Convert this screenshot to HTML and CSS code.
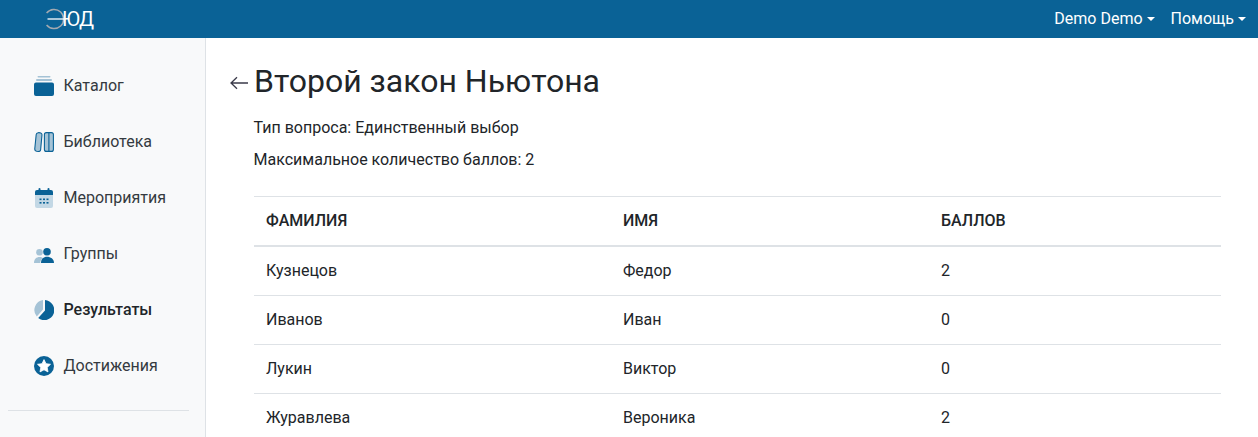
FILE: index.html
```html
<!DOCTYPE html>
<html lang="ru">
<head>
    <meta charset="UTF-8">
    <title>Второй закон Ньютона</title>
    <link rel="stylesheet" href="styles.css">
</head>
<body>
    <header class="topbar">
        <a href="#" class="logo">
            <svg class="logo-mark" width="20" height="22" viewBox="0 0 20 22">
                <path d="M1.6 5 A 9.6 9.6 0 1 1 1.6 17" fill="none" stroke="#a3a9b0" stroke-width="1.5"/>
                <path d="M2.5 11 H19" stroke="#fff" stroke-width="1.3"/>
            </svg>
            <span class="logo-text">ЮД</span>
        </a>
        <nav class="topnav">
            <a href="#" class="dropdown">Demo Demo</a>
            <a href="#" class="dropdown">Помощь</a>
        </nav>
    </header>

    <div class="layout">
        <!-- Боковое меню -->
        <aside class="sidebar">
            <ul class="menu">
                <li class="menu-item">
                    <svg class="menu-icon" viewBox="0 0 20 20">
                        <rect x="3.5" y="0" width="13" height="1.6" rx=".8" fill="#a5c3d6"/>
                        <rect x="2" y="3" width="16" height="2" rx="1" fill="#a5c3d6"/>
                        <path d="M2 6.5 H18 A2 2 0 0 1 20 8.5 V18 A2 2 0 0 1 18 20 H2 A2 2 0 0 1 0 18 V8.5 A2 2 0 0 1 2 6.5 Z" fill="#0a6296"/>
                    </svg>
                    Каталог
                </li>
                <li class="menu-item">
                    <svg class="menu-icon" viewBox="0 0 20 20">
                        <path d="M4 .7 C6 .4 8 1 8 2.8 L6.6 18 C6.4 19.6 4.6 19.6 2.6 19.3 C1 19 .6 18 .8 16.5 L2.2 2.5 C2.4 1.2 3 .8 4 .7 Z" fill="#a5c3d6" stroke="#0a6296" stroke-width="1.1"/>
                        <rect x="10.4" y=".6" width="9" height="18.8" rx="2" fill="#a5c3d6" stroke="#0a6296" stroke-width="1.1"/>
                        <path d="M14.9 .6 V19.4" stroke="#0a6296" stroke-width="1.1"/>
                    </svg>
                    Библиотека
                </li>
                <li class="menu-item">
                    <svg class="menu-icon" viewBox="0 0 20 20">
                        <path d="M1 7 H19 V18 A2 2 0 0 1 17 20 H3 A2 2 0 0 1 1 18 Z" fill="#c3d8e5"/>
                        <path d="M3 2 H17 A2 2 0 0 1 19 4 V7 H1 V4 A2 2 0 0 1 3 2 Z" fill="#0a6296"/>
                        <rect x="4.5" y="0" width="2" height="3.5" rx="1" fill="#0a6296"/>
                        <rect x="13.5" y="0" width="2" height="3.5" rx="1" fill="#0a6296"/>
                        <g fill="#0a6296">
                            <rect x="5.5" y="10.5" width="2" height="1.6"/>
                            <rect x="9" y="10.5" width="2" height="1.6"/>
                            <rect x="12.5" y="10.5" width="2" height="1.6"/>
                            <rect x="5.5" y="14" width="2" height="1.6"/>
                            <rect x="9" y="14" width="2" height="1.6"/>
                            <rect x="12.5" y="14" width="2" height="1.6"/>
                        </g>
                    </svg>
                    Мероприятия
                </li>
                <li class="menu-item">
                    <svg class="menu-icon" viewBox="0 0 20 20">
                        <circle cx="5.5" cy="8.3" r="3.3" fill="#a5c3d6"/>
                        <path d="M0 19 C0 15 2.5 13 5.5 13 C7 13 8.2 13.5 9 14 C7.2 15 6.3 17 6.3 19 Z" fill="#a5c3d6"/>
                        <circle cx="13" cy="7.8" r="3.8" fill="#0a6296"/>
                        <path d="M7 19 C7 15 9.5 12.8 13 12.8 C16.5 12.8 20 15 20 19 Z" fill="#0a6296"/>
                    </svg>
                    Группы
                </li>
                <li class="menu-item menu-item-active">
                    <svg class="menu-icon" viewBox="0 0 20 20">
                        <path d="M9 .1 V9.5 L2.8 16.5 A10 10 0 0 1 9 .1 Z" fill="#a5c3d6"/>
                        <path d="M11 .1 A10 10 0 1 1 4.2 18 L11 10.5 Z" fill="#0a6296"/>
                    </svg>
                    Результаты
                </li>
                <li class="menu-item">
                    <svg class="menu-icon" viewBox="0 0 20 20">
                        <circle cx="10" cy="10" r="10" fill="#0a6296"/>
                        <path d="M10 3.6 L12 7.7 L16.5 8.3 L13.2 11.4 L14 15.9 L10 13.8 L6 15.9 L6.8 11.4 L3.5 8.3 L8 7.7 Z" fill="#fff" stroke="#fff" stroke-width=".8" stroke-linejoin="round"/>
                    </svg>
                    Достижения
                </li>
            </ul>
            <hr class="menu-divider">
        </aside>

        <!-- Результаты вопроса -->
        <main class="content">
            <div class="title-row">
                <a href="#" class="back-link">
                    <svg width="18" height="14" viewBox="0 0 18 14">
                        <path d="M18 7 H1 M7 1.2 L1 7 L7 12.8" fill="none" stroke="#3a3a4a" stroke-width="1.3"/>
                    </svg>
                </a>
                <h1>Второй закон Ньютона</h1>
            </div>
            <p class="meta">Тип вопроса: Единственный выбор</p>
            <p class="meta">Максимальное количество баллов: 2</p>
            <table class="results">
                <thead>
                    <tr>
                        <th class="col-last">Фамилия</th>
                        <th class="col-first">Имя</th>
                        <th>Баллов</th>
                    </tr>
                </thead>
                <tbody>
                    <tr><td>Кузнецов</td><td>Федор</td><td>2</td></tr>
                    <tr><td>Иванов</td><td>Иван</td><td>0</td></tr>
                    <tr><td>Лукин</td><td>Виктор</td><td>0</td></tr>
                    <tr><td>Журавлева</td><td>Вероника</td><td>2</td></tr>
                </tbody>
            </table>
        </main>
    </div>
</body>
</html>
```

FILE: styles.css
```css
* {
    box-sizing: border-box;
}
html, body {
    height: 100%;
}
body {
    margin: 0;
    overflow: hidden;
    font-family: Roboto, "Liberation Sans", sans-serif;
    font-size: 16px;
    line-height: 24px;
    color: #212529;
    background-color: #fff;
}
a {
    color: inherit;
    text-decoration: none;
}
.topbar {
    display: flex;
    align-items: center;
    justify-content: space-between;
    height: 38px;
    padding: 0 12px 0 45px;
    background-color: #0a6296;
    color: #fff;
}
.logo {
    display: flex;
    align-items: center;
}
.logo-text {
    margin-left: -3px;
    font-size: 20px;
    letter-spacing: -0.5px;
}
.topnav {
    display: flex;
    gap: 16px;
}
.dropdown {
    display: flex;
    align-items: center;
}
.dropdown::after {
    content: "";
    margin-left: 4px;
    border-top: 4px solid #fff;
    border-left: 4px solid transparent;
    border-right: 4px solid transparent;
}
.layout {
    display: flex;
    height: 399px;
}
.sidebar {
    flex: 0 0 206px;
    padding: 20px 16px 0 8px;
    background-color: #f8f9fa;
    border-right: 1px solid #dee2e6;
}
.menu {
    margin: 0;
    padding: 0;
    list-style: none;
}
.menu-item {
    display: flex;
    align-items: center;
    height: 56px;
    padding-left: 26px;
    color: #343a40;
}
.menu-item-active {
    font-weight: 500;
    color: #212529;
}
.menu-icon {
    flex: none;
    width: 20px;
    height: 20px;
    margin-right: 9.5px;
}
.menu-divider {
    margin: 16px 0 0;
    border: 0;
    border-top: 1px solid #dee2e6;
}
.content {
    flex: 1;
    padding: 23px 37px 0 48px;
}
.title-row {
    position: relative;
    margin-bottom: 15px;
}
.back-link {
    position: absolute;
    left: -24px;
    top: 15px;
    display: flex;
}
h1 {
    margin: 0;
    font-size: 32px;
    font-weight: 400;
    line-height: 40px;
}
.meta {
    margin: 0 0 8px -0.5px;
}
.results {
    width: 100%;
    margin-top: 24px;
    border-collapse: collapse;
}
.results th, .results td {
    padding: 12px;
    text-align: left;
    border-top: 1px solid #dee2e6;
}
.results th {
    font-weight: 500;
    text-transform: uppercase;
    border-bottom: 2px solid #dee2e6;
}
.col-last {
    width: 357px;
}
.col-first {
    width: 318px;
}
```
